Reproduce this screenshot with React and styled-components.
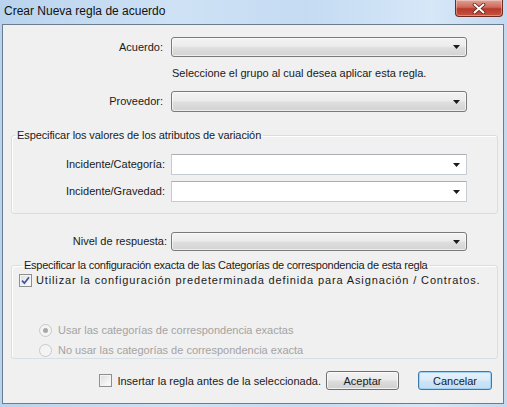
import React from 'react';
import styled, { createGlobalStyle } from 'styled-components';

const GlobalStyle = createGlobalStyle`
  html, body {
    margin: 0;
    padding: 0;
    background: #fff;
  }
  * {
    box-sizing: border-box;
  }
`;

const Window = styled.div`
  width: 507px;
  height: 407px;
  display: flex;
  flex-direction: column;
  background: linear-gradient(90deg, #b9d3ee 0%, #cfe2f5 35%, #c4dbf2 60%, #d6e7f8 85%, #c3d9ef 100%);
  font-family: "Liberation Sans", Arial, sans-serif;
  font-size: 11px;
  color: #1a1a1a;
`;

const TitleBar = styled.div`
  height: 24px;
  display: flex;
  align-items: flex-start;
  justify-content: space-between;
  padding-left: 4px;
  padding-right: 4px;
`;

const Title = styled.div`
  font-size: 12px;
  line-height: 14px;
  margin-top: 4px;
  color: #111;
`;

const CloseButton = styled.div`
  width: 48px;
  height: 17px;
  display: flex;
  align-items: center;
  justify-content: center;
  border: 1px solid #6e2a23;
  border-top: none;
  border-radius: 0 0 4px 4px;
  background: linear-gradient(#e0a195 0%, #cf6a5b 45%, #b8392b 55%, #c65440 100%);
  box-shadow: inset 0 0 0 1px rgba(255, 255, 255, 0.35);
`;

const Client = styled.div`
  flex: 1;
  margin: 0 3px 3px 2px;
  border: 1px solid #6b7c8e;
  background: #f0f0f0;
  display: flex;
  flex-direction: column;
  padding-top: 12px;
`;

const FieldRow = styled.div`
  display: grid;
  grid-template-columns: ${p => p.$label}px 296px;
  column-gap: ${p => p.$gap}px;
  align-items: center;
  margin-top: ${p => p.$top || 0}px;
`;

const Label = styled.label`
  text-align: right;
  white-space: nowrap;
  line-height: 13px;
`;

const Combo = styled.div`
  height: ${p => p.$h}px;
  display: flex;
  align-items: center;
  justify-content: flex-end;
  padding-right: 6px;
  border: 1px solid ${p => (p.$white ? '#c5cbd2' : '#7a7a7a')};
  border-top-color: ${p => (p.$white ? '#abadb3' : '#7a7a7a')};
  border-radius: ${p => (p.$white ? '1px' : '3px')};
  background: ${p =>
    p.$white
      ? '#ffffff'
      : 'linear-gradient(#f3f3f3 0%, #ececec 45%, #dedede 55%, #d3d3d3 100%)'};
  box-shadow: ${p => (p.$white ? 'none' : 'inset 0 0 0 1px rgba(255,255,255,0.6)')};
`;

const HelpText = styled.div`
  margin-top: 10px;
  padding-left: 169px;
  line-height: 13px;
`;

const Group = styled.fieldset`
  margin: ${p => p.$top}px 5px 0 8px;
  padding: 0 0 ${p => p.$bottom}px ${p => p.$left}px;
  border: 1px solid #d5dfe5;
  border-radius: 3px;
  box-shadow: inset 1px 1px 0 #fff;
  min-width: 0;
`;

const Legend = styled.legend`
  margin-left: 3px;
  padding: 0 2px;
  line-height: 13px;
  font-size: 11px;
  letter-spacing: ${p => p.$spacing || 0}px;
`;

const GroupBody = styled.div`
  display: flex;
  flex-direction: column;
  gap: ${p => p.$gap || 0}px;
  margin-top: ${p => p.$top || 0}px;
`;

const CheckLine = styled.div`
  display: flex;
  align-items: center;
  gap: ${p => p.$gap}px;
  height: 14px;
  color: ${p => (p.$disabled ? '#a3a3a3' : '#1a1a1a')};
  margin-top: ${p => p.$top || 0}px;
  padding-left: ${p => p.$indent || 0}px;
  white-space: nowrap;
  letter-spacing: ${p => p.$spacing || 0}px;
`;

const BoxMark = styled.span`
  width: 13px;
  height: 13px;
  flex: none;
  display: flex;
  align-items: center;
  justify-content: center;
  border: 1px solid #8e8f8f;
  background: linear-gradient(135deg, #dcdcdc 0%, #f2f2f2 60%, #ffffff 100%);
  box-shadow: inset 0 0 0 1px #f4f4f4;
`;

const RadioMark = styled.span`
  width: 13px;
  height: 13px;
  flex: none;
  border-radius: 50%;
  display: flex;
  align-items: center;
  justify-content: center;
  border: 1px solid #c9c9c9;
  background: #f4f4f4;
`;

const RadioDot = styled.span`
  width: 5px;
  height: 5px;
  border-radius: 50%;
  background: #a8a8a8;
`;

const Footer = styled.div`
  display: flex;
  align-items: center;
  justify-content: flex-end;
  margin-top: 12px;
  padding-right: 11px;
`;

const Button = styled.button`
  width: ${p => p.$w}px;
  height: 19px;
  margin-left: ${p => p.$left}px;
  padding: 0;
  font-family: inherit;
  font-size: 11px;
  color: #1a1a1a;
  border: 1px solid ${p => (p.$default ? '#3d7bad' : '#707070')};
  border-radius: 3px;
  background: ${p =>
    p.$default
      ? 'linear-gradient(#e5f1fb 0%, #dcecf8 45%, #cde4f6 55%, #c2ddf3 100%)'
      : 'linear-gradient(#f2f2f2 0%, #ebebeb 45%, #dddddd 55%, #cfcfcf 100%)'};
  box-shadow: ${p =>
    p.$default ? 'inset 0 0 0 1px #9fd1f3' : 'inset 0 0 0 1px rgba(255,255,255,0.7)'};
`;

const Arrow = () => (
  <svg width="7" height="4" viewBox="0 0 7 4">
    <path d="M0 0 H7 L3.5 4 Z" fill="#1a1a1a" />
  </svg>
);

const Check = () => (
  <svg width="9" height="9" viewBox="0 0 9 9">
    <path d="M1 4.6 L3.4 7.2 L8 1.2" fill="none" stroke="#3d5aa0" strokeWidth="1.8" />
  </svg>
);

const CloseX = () => (
  <svg width="14" height="11" viewBox="0 0 14 11">
    <path d="M2.5 1.5 L11.5 9.5 M11.5 1.5 L2.5 9.5" stroke="#5a2018" strokeWidth="3.6" strokeLinecap="round" />
    <path d="M2.5 1.5 L11.5 9.5 M11.5 1.5 L2.5 9.5" stroke="#ffffff" strokeWidth="2" strokeLinecap="round" />
  </svg>
);

const Select = ({ white, h }) => (
  <Combo $white={white} $h={h}>
    <Arrow />
  </Combo>
);

export default function App() {
  return (
    <>
      <GlobalStyle />
      <Window>
        <TitleBar>
          <Title>Crear Nueva regla de acuerdo</Title>
          <CloseButton>
            <CloseX />
          </CloseButton>
        </TitleBar>
        <Client>
          <FieldRow $label={160} $gap={8}>
            <Label>Acuerdo:</Label>
            <Select h={20} />
          </FieldRow>
          <HelpText>Seleccione el grupo al cual desea aplicar esta regla.</HelpText>
          <FieldRow $label={160} $gap={8} $top={11}>
            <Label>Proveedor:</Label>
            <Select h={21} />
          </FieldRow>

          <Group $top={17} $bottom={11} $left={0}>
            <Legend $spacing={-0.1}>Especificar los valores de los atributos de variación</Legend>
            <GroupBody $top={12} $gap={6}>
              <FieldRow $label={153} $gap={6}>
                <Label>Incidente/Categoría:</Label>
                <Select white h={21} />
              </FieldRow>
              <FieldRow $label={153} $gap={6}>
                <Label>Incidente/Gravedad:</Label>
                <Select white h={21} />
              </FieldRow>
            </GroupBody>
          </Group>

          <FieldRow $label={164} $gap={4} $top={18}>
            <Label>Nivel de respuesta:</Label>
            <Select h={19} />
          </FieldRow>

          <Group $top={8} $bottom={1} $left={7}>
            <Legend $spacing={-0.25}>
              Especificar la configuración exacta de las Categorías de correspondencia de esta regla
            </Legend>
            <GroupBody $top={1}>
              <CheckLine $gap={4} $spacing={0.87}>
                <BoxMark>
                  <Check />
                </BoxMark>
                <span>Utilizar la configuración predeterminada definida para Asignación / Contratos.</span>
              </CheckLine>
              <CheckLine $gap={6} $disabled $top={36} $indent={20}>
                <RadioMark>
                  <RadioDot />
                </RadioMark>
                <span>Usar las categorías de correspondencia exactas</span>
              </CheckLine>
              <CheckLine $gap={6} $disabled $top={6} $indent={20}>
                <RadioMark />
                <span>No usar las categorías de correspondencia exacta</span>
              </CheckLine>
            </GroupBody>
          </Group>

          <Footer>
            <CheckLine $gap={5}>
              <BoxMark />
              <span>Insertar la regla antes de la seleccionada.</span>
            </CheckLine>
            <Button $w={73} $left={5}>Aceptar</Button>
            <Button $w={74} $left={19} $default>Cancelar</Button>
          </Footer>
        </Client>
      </Window>
    </>
  );
}
